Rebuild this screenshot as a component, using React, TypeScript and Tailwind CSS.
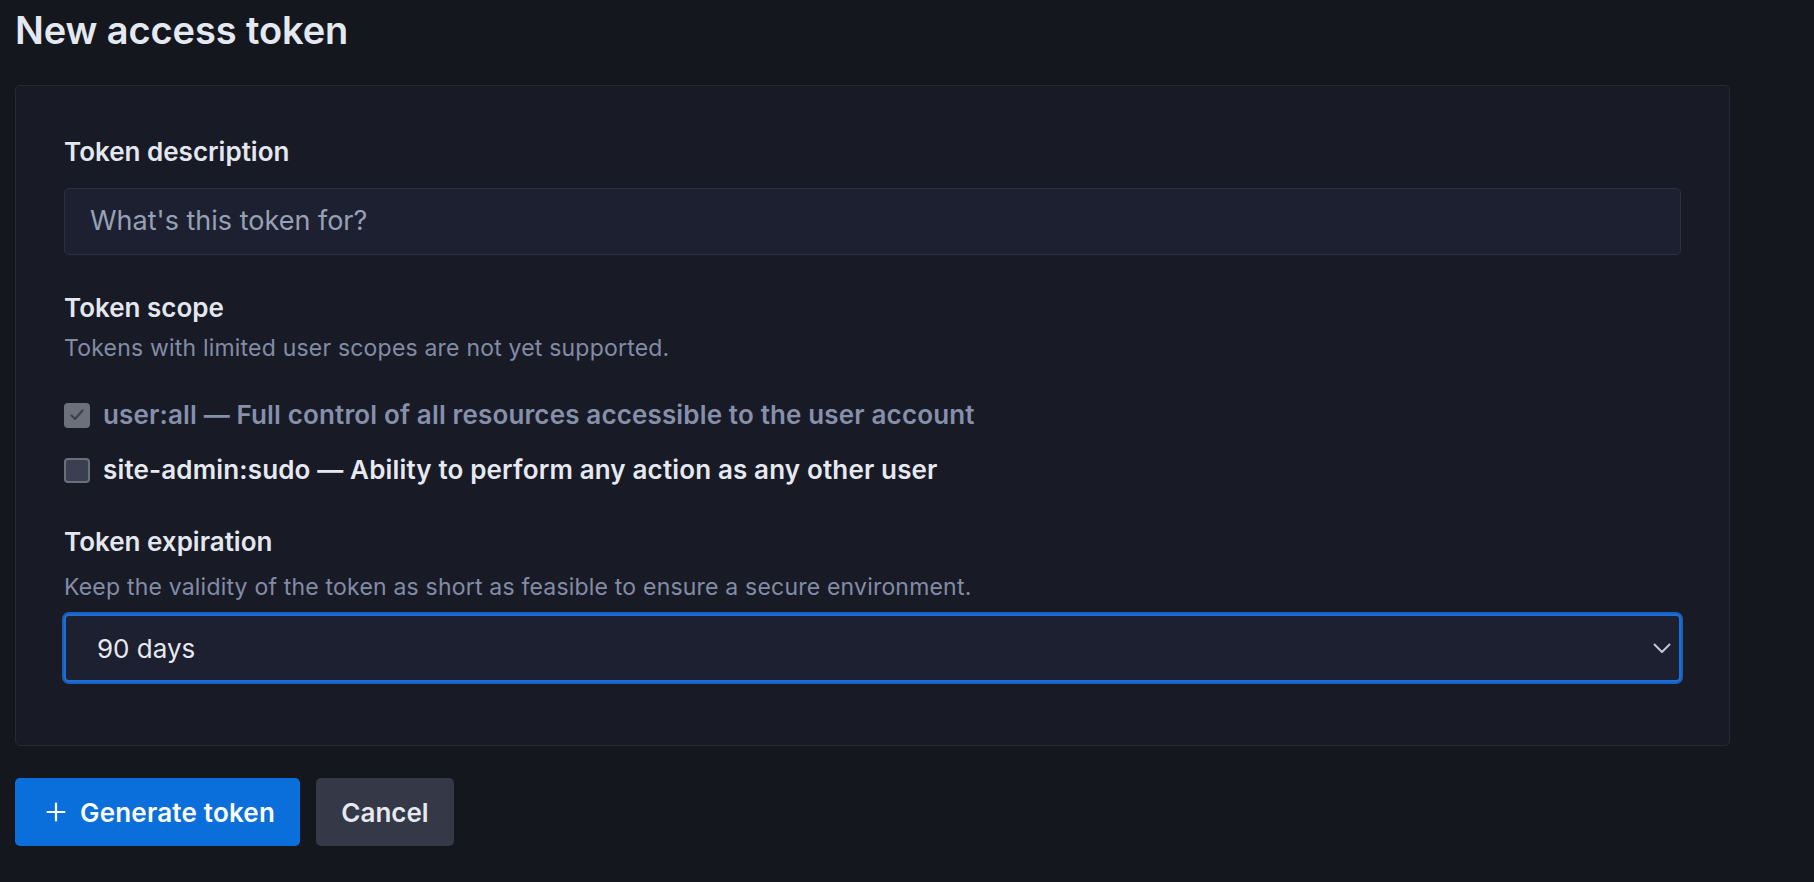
import React from "react";

function Chevron() {
  return (
    <svg width="18" height="11" viewBox="0 0 18 11" fill="none" className="shrink-0">
      <path d="M1.5 1.5 L9 9 L16.5 1.5" stroke="#c3c7d0" strokeWidth="2" strokeLinecap="round" strokeLinejoin="round" />
    </svg>
  );
}

function PlusIcon() {
  return (
    <svg width="20" height="20" viewBox="0 0 20 20" fill="none" className="shrink-0">
      <path d="M10 1.5 V18.5 M1.5 10 H18.5" stroke="#ffffff" strokeWidth="2.2" strokeLinecap="round" />
    </svg>
  );
}

export default function App() {
  return (
    <div className="min-h-screen w-full bg-[#15171f] pl-[15px] pt-[7px] font-['Inter','Liberation_Sans',sans-serif] antialiased">
      <h1 className="text-[38px] leading-[46px] font-semibold text-[#e4e8f1] tracking-[-0.1px]">New access token</h1>

      <div className="mt-[32px] w-[1715px] rounded-[5px] border border-[#262a37] bg-[#181b26] px-[48px] pt-[50px] pb-[63px]">
        <div className="text-[26px] leading-[32px] font-semibold text-[#e3e7ef]">Token description</div>
        <div className="mt-[20px] flex h-[67px] items-center rounded-[5px] border border-[#2c3141] bg-[#1d2030] pl-[25px] text-[27px] text-[#98a0b4]">
          What's this token for?
        </div>

        <div className="mt-[37px] text-[26px] leading-[32px] font-semibold text-[#e3e7ef]">Token scope</div>
        <div className="mt-[10px] text-[23px] leading-[28px] tracking-[0.2px] text-[#838ca6]">
          Tokens with limited user scopes are not yet supported.
        </div>

        <div className="mt-[37px] flex items-center gap-[13px]">
          <div className="flex h-[25px] w-[26px] items-center justify-center rounded-[4px] bg-[#6c707b]">
            <svg width="16" height="14" viewBox="0 0 16 14" fill="none">
              <path d="M2.5 7.5 L6 11 L13.5 2.5" stroke="#3c4156" strokeWidth="2.4" strokeLinecap="round" strokeLinejoin="round" />
            </svg>
          </div>
          <span className="text-[26px] leading-[32px] font-semibold tracking-[0.15px] text-[#8690ab]">
            user:all — Full control of all resources accessible to the user account
          </span>
        </div>

        <div className="mt-[23px] flex items-center gap-[13px]">
          <div className="h-[25px] w-[26px] rounded-[4px] border-2 border-[#6a6f7c] bg-[#3a3f51]" />
          <span className="text-[26px] leading-[32px] font-semibold tracking-[0.15px] text-[#e6e9f0]">
            site-admin:sudo — Ability to perform any action as any other user
          </span>
        </div>

        <div className="mt-[40px] text-[26px] leading-[32px] font-semibold text-[#e3e7ef]">Token expiration</div>
        <div className="mt-[15px] text-[23px] leading-[28px] tracking-[0.2px] text-[#838ca6]">
          Keep the validity of the token as short as feasible to ensure a secure environment.
        </div>
        <div className="mt-[13px] flex h-[68px] items-center justify-between rounded-[5px] border-2 border-[#1b6fd6] bg-[#1d2030] pl-[31px] pr-[8px] text-[26px] text-[#e6e9f0] shadow-[0_0_0_2px_#1a5fb8]">
          <span>90 days</span>
          <Chevron />
        </div>
      </div>

      <div className="mt-[32px] flex gap-[16px]">
        <button className="flex h-[68px] w-[285px] items-center gap-[14px] rounded-[5px] bg-[#0b6fdb] pl-[31px] text-[26px] font-semibold tracking-[0.2px] text-white">
          <PlusIcon />
          <span>Generate token</span>
        </button>
        <button className="flex h-[68px] w-[138px] items-center justify-center rounded-[5px] bg-[#343847] text-[26px] font-semibold text-[#e6e9f0]">
          Cancel
        </button>
      </div>
    </div>
  );
}
